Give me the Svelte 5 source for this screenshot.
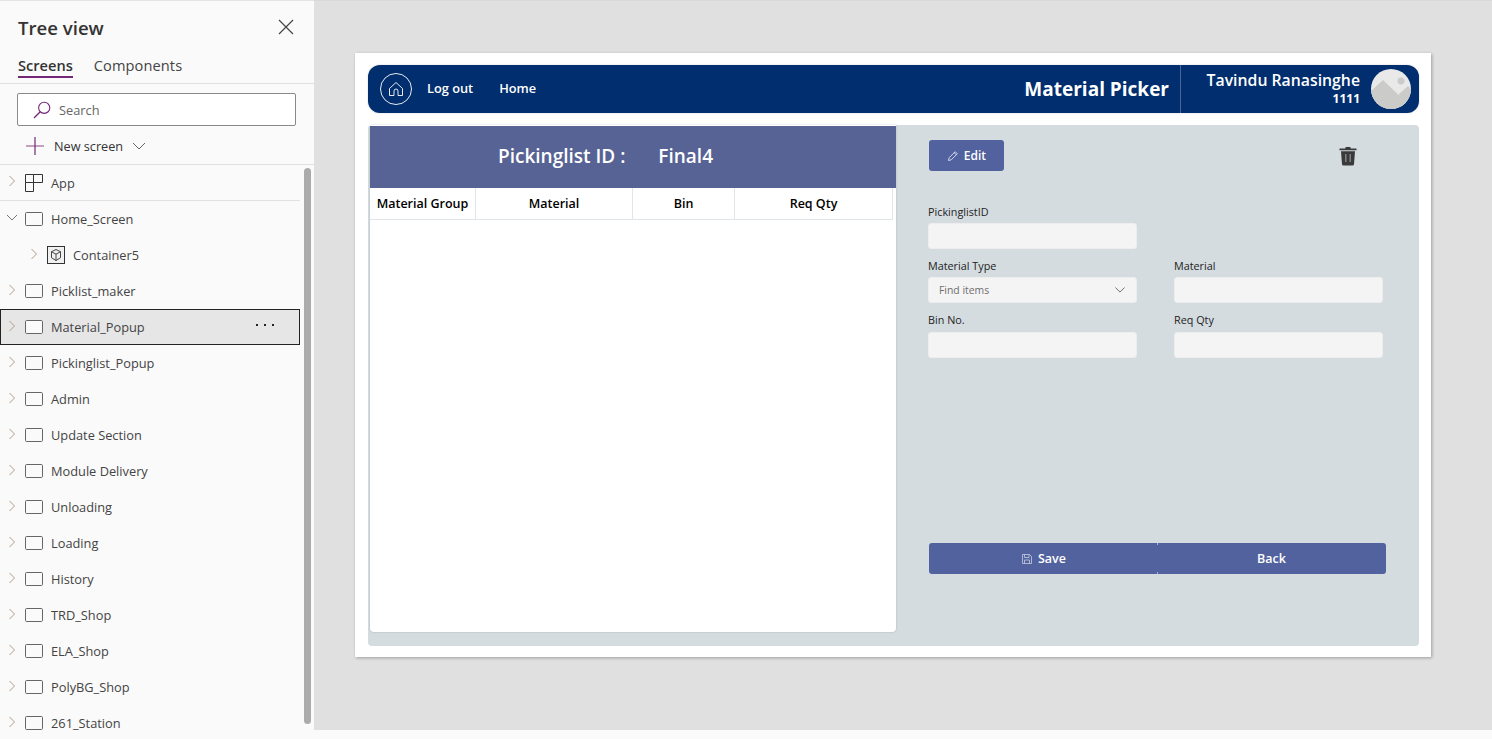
<script>
  const rows = [
    { name: 'App', icon: 'app', sep: true },
    { name: 'Home_Screen', open: true },
    { name: 'Container5', icon: 'box', child: true },
    { name: 'Picklist_maker' },
    { name: 'Material_Popup', selected: true },
    { name: 'Pickinglist_Popup' },
    { name: 'Admin' },
    { name: 'Update Section' },
    { name: 'Module Delivery' },
    { name: 'Unloading' },
    { name: 'Loading' },
    { name: 'History' },
    { name: 'TRD_Shop' },
    { name: 'ELA_Shop' },
    { name: 'PolyBG_Shop' },
    { name: '261_Station' }
  ];
  const cols = ['Material Group', 'Material', 'Bin', 'Req Qty'];
</script>

<div class="app">
  <aside class="tree">
    <div class="title-row">
      <h1>Tree view</h1>
      <svg class="close" viewBox="0 0 16 16" width="16" height="16"><path d="M1 1l14 14M15 1L1 15" stroke="#444" stroke-width="1.2" fill="none"/></svg>
    </div>
    <div class="tabs">
      <span class="tab active">Screens</span>
      <span class="tab">Components</span>
    </div>
    <div class="search">
      <svg viewBox="0 0 20 20" width="20" height="20"><circle cx="12.2" cy="7.8" r="5.6" fill="none" stroke="#742774" stroke-width="1.1"/><path d="M8.2 11.8L2 18" stroke="#742774" stroke-width="1.3"/></svg>
      <span>Search</span>
    </div>
    <div class="new-screen">
      <svg viewBox="0 0 18 18" width="18" height="18"><path d="M0 9h18" stroke="#9b6a9b" stroke-width="1.2"/><path d="M9 0v18" stroke="#742774" stroke-width="1.2"/></svg>
      <span>New screen</span>
      <svg viewBox="0 0 14 8" width="14" height="8"><path d="M1 1l6 6 6-6" stroke="#666" fill="none"/></svg>
    </div>
    <div class="list">
      {#each rows as r}
        <div class="row" class:selected={r.selected} class:sep={r.sep} class:child={r.child}>
          <svg class="chev" viewBox="0 0 8 12" width="8" height="12">
            {#if r.open}
              <path d="M-1 3l5 5 5-5" stroke="#777" fill="none"/>
            {:else}
              <path d="M1.5 1l5 5-5 5" stroke="#b59a83" fill="none"/>
            {/if}
          </svg>
          {#if r.icon === 'app'}
            <svg class="ic" viewBox="0 0 18 18" width="18" height="18"><path d="M.5 .5h8v8h-8zM8.5 .5h9v8h-9zM.5 8.5h8v9h-8z" fill="none" stroke="#333"/></svg>
          {:else if r.icon === 'box'}
            <svg class="ic" viewBox="0 0 18 18" width="18" height="18"><rect x=".5" y=".5" width="17" height="17" fill="#f0f0f0" stroke="#333"/><path d="M9 3.5l4.5 2.2v6L9 14.5l-4.5-2.800v-6zM4.500 5.700L9 8.200l4.500-2.500M9 8.200v6.300" fill="none" stroke="#333" stroke-width=".9"/></svg>
          {:else}
            <svg class="ic" viewBox="0 0 18 14" width="18" height="14"><rect x=".5" y=".5" width="17" height="13" rx="1.200" fill="#fafafa" stroke="#666"/></svg>
          {/if}
          <span class="label">{r.name}</span>
          {#if r.selected}
            <svg class="more" viewBox="0 0 18 2" width="18" height="2"><rect x="0" width="2" height="2" fill="#222"/><rect x="8" width="2" height="2" fill="#222"/><rect x="16" width="2" height="2" fill="#222"/></svg>
          {/if}
        </div>
      {/each}
    </div>
    <div class="scrollbar"></div>
  </aside>

  <main class="stage">
    <div class="canvas">
      <header class="topbar">
        <div class="home-ic">
          <svg viewBox="0 0 16 16" width="16" height="16"><path d="M1.500 7.500L8 1.500l6.500 6v7h-4.500v-4.500a2 2 0 0 0-4 0v4.500H1.500z" fill="none" stroke="#fff" stroke-width=".9"/></svg>
        </div>
        <a class="nav first">Log out</a>
        <a class="nav">Home</a>
        <span class="app-title">Material Picker</span>
        <div class="user">
          <div class="who">
            <div class="uname">Tavindu Ranasinghe</div>
            <div class="uid">1111</div>
          </div>
          <svg class="avatar" viewBox="0 0 40 40" width="40" height="40">
            <defs><clipPath id="cc"><circle cx="20" cy="20" r="20"/></clipPath></defs>
            <circle cx="20" cy="20" r="20" fill="#e9e9e9"/>
            <g clip-path="url(#cc)">
              <path d="M0 22L12 11l25 24 6-7v14H0z" fill="#cbcbc9"/>
              <path d="M28 25l9-8 5 5v20H30z" fill="#cbcbc9"/>
              <circle cx="30" cy="12" r="3.500" fill="#cbcbc9"/>
            </g>
          </svg>
        </div>
      </header>

      <section class="body">
        <div class="card">
          <div class="card-head">
            <span class="pl">Pickinglist ID :</span>
            <span class="pv">Final4</span>
          </div>
          <div class="thead">
            {#each cols as c}<div class="th">{c}</div>{/each}
          </div>
        </div>

        <div class="panel">
          <div class="tools">
            <button class="edit">
              <svg viewBox="0 0 12 12" width="12" height="12"><path d="M1.500 10.500l.7-2.800 6-6 2.100 2.100-6 6zM7.200 2.700l2.100 2.100" fill="none" stroke="#dfe3f0" stroke-width=".9"/></svg>
              Edit
            </button>
            <svg class="trash" viewBox="0 0 18 20" width="18" height="20"><path d="M6.500 2.500V1h5v1.500H17.500v1.700H.5V2.500z" fill="#3a3a3a"/><path d="M2 5.200h14l-1 13a1.500 1.500 0 0 1-1.500 1.300h-9A1.500 1.500 0 0 1 3 18.200z" fill="#3a3a3a"/><path d="M6.800 8v8M11.200 8v8" stroke="#8b8f90" stroke-width="1.300"/></svg>
          </div>

          <div class="form">
            <label class="field"><span>PickinglistID</span><div class="input"></div></label>
            <div></div>
            <label class="field"><span>Material Type</span>
              <div class="input select"><em>Find items</em>
                <svg viewBox="0 0 12 7" width="10" height="6"><path d="M.5 .5L6 6l5.500-5.500" fill="none" stroke="#555"/></svg>
              </div>
            </label>
            <label class="field"><span>Material</span><div class="input"></div></label>
            <label class="field"><span>Bin No.</span><div class="input"></div></label>
            <label class="field"><span>Req Qty</span><div class="input"></div></label>
          </div>

          <div class="actions">
            <button class="act left">
              <svg viewBox="0 0 10 10" width="10" height="10"><path d="M.5 .5h7l2 2v7h-9zM2.500 .5v3h4.500v-3M2.500 9.500v-3.500h5v3.500" fill="none" stroke="#c8cde2" stroke-width=".8"/></svg>
              Save
            </button>
            <button class="act right">Back</button>
          </div>
        </div>
      </section>
    </div>
  </main>
</div>

<style>
  :global(body) { margin: 0; background: #fafafa; overflow: hidden; }
  .app { display: flex; width: 1492px; height: 739px; overflow: hidden; }

  .tree {
    position: relative; width: 314px; flex: none; height: 739px; box-sizing: border-box;
    background: #fafafa; font-family: "Open Sans", "Noto Sans", sans-serif; color: #333;
    border-top: 1px solid #e4e4e4; overflow: hidden;
  }
  .title-row { display: flex; align-items: center; justify-content: space-between; height: 27px; padding: 13px 20px 0 18px; }
  .title-row h1 { margin: 0; font-size: 18.600px; font-weight: 600; color: #333; line-height: 27px; }
  .close { display: block; margin-top: -1px; }
  .tabs { display: flex; gap: 21px; height: 43px; padding-left: 18px; border-bottom: 1px solid #e1e1e1; box-sizing: border-box; align-items: flex-start; padding-top: 14px; }
  .tab { font-size: 14.600px; line-height: 20px; color: #444; letter-spacing: .1px; position: relative; }
  .tab.active { font-weight: 600; color: #333; letter-spacing: 0; }
  .tab.active::after { content: ""; position: absolute; left: 0; right: 0; bottom: -3px; height: 2px; background: #742774; }
  .search {
    margin: 9px 0 0 17px; width: 279px; height: 33px; box-sizing: border-box; border: 1px solid #8a8a8a; border-radius: 2px;
    background: #fff; display: flex; align-items: center; gap: 7px; padding-left: 14px; font-size: 12.800px; color: #666;
  }
  .new-screen { display: flex; align-items: center; height: 39px; padding: 1px 0 0 26px; font-size: 12.700px; color: #333; box-sizing: border-box; border-bottom: 1px solid #e1e1e1; }
  .new-screen span { margin: 0 9px 0 10px; }
  .list { display: flex; flex-direction: column; }
  .row { display: flex; align-items: center; height: 36px; box-sizing: border-box; width: 300px; padding-left: 8px; font-size: 12.800px; color: #444; position: relative; }
  .row.sep { border-bottom: 1px solid #e1e1e1; }
  .row.child { padding-left: 30px; }
  .row.selected { background: #e6e6e6; border: 1px solid #222; padding-left: 7px; margin-top: 0; }
  .chev { flex: none; margin-top: -3px; overflow: visible; }
  .ic { flex: none; margin-left: 9px; }
  .label { margin-left: 8px; white-space: nowrap; }
  .more { position: absolute; left: 255px; top: 14px; }
  .scrollbar { position: absolute; left: 304px; top: 167px; width: 7px; height: 556px; border-radius: 4px; background: #ababab; }

  .stage { flex: 1; height: 730px; background: #e0e0e0; padding: 52px 0 0 41px; box-sizing: border-box; border-top: 1px solid #d9d9d9; font-family: "Open Sans", sans-serif; }
  .canvas { width: 1076px; height: 604px; background: #fff; box-shadow: 1px 1px 3px rgba(0,0,0,.3); box-sizing: border-box; padding: 12px 12px 11px 13px; }

  .topbar {
    display: flex; align-items: center; height: 48px; background: #002e6e; border-radius: 12px; color: #fff; box-sizing: border-box; padding-left: 12px;
    box-shadow: 0 0 2px rgba(0,0,0,.2);
  }
  .home-ic { width: 30px; height: 30px; border: 1px solid #e8ecf4; border-radius: 50%; display: flex; align-items: center; justify-content: center; flex: none; margin-top: -1px; }
  .nav { font-size: 12.800px; font-weight: 600; color: #fff; margin-left: 26px; line-height: 18px; margin-top: -2px; }
  .nav.first { margin-left: 15px; }
  .app-title { margin-left: auto; font-size: 19px; font-weight: 700; margin-right: 11px; margin-top: -1px; }
  .user { display: flex; align-items: center; height: 48px; width: 239px; box-sizing: border-box; border-left: 1px solid #4d6496; justify-content: flex-end; padding-right: 8px; flex: none; }
  .who { text-align: right; margin-right: 11px; margin-top: -2px; }
  .uname { font-size: 15.800px; font-weight: 600; line-height: 18px; }
  .uid { font-size: 12px; font-weight: 700; line-height: 14px; margin-top: 3px; }
  .avatar { display: block; flex: none; }

  .body { display: flex; height: 521px; margin-top: 12px; background: #d5dce0; border-radius: 4px; }
  .card { width: 526px; height: 507px; margin-left: 2px; background: #fff; border-radius: 0 0 4px 4px; box-shadow: 0 0 2px rgba(0,0,0,.22); flex: none; box-sizing: border-box; padding-top: 1px; }
  .card-head { height: 62px; background: #576394; color: #fff; display: flex; align-items: center; font-size: 19px; font-weight: 600; box-sizing: border-box; padding-bottom: 3px; }
  .pl { margin-left: 128px; }
  .pv { margin-left: 33px; }
  .thead { display: grid; grid-template-columns: 106px 157px 102px 158px; height: 31px; width: 523px; border-bottom: 1px solid #dfe5e8; }
  .th { display: flex; align-items: center; justify-content: center; font-size: 12.500px; font-weight: 600; color: #000; border-right: 1px solid #dfe5e8; white-space: nowrap; box-sizing: border-box; }

  .panel { flex: 1; display: flex; flex-direction: column; padding: 15px 33px 72px 32px; box-sizing: border-box; min-width: 0; }
  .tools { display: flex; align-items: center; justify-content: space-between; height: 31px; padding: 0 29px 0 1px; margin-bottom: 34px; }
  .edit { display: flex; align-items: center; justify-content: center; gap: 5px; width: 75px; height: 31px; border: 0; border-radius: 3px; background: #51629e; color: #fff; font: 600 12px "Open Sans", sans-serif; padding: 0; }
  .trash { display: block; }
  .form { display: grid; grid-template-columns: 209px 209px; column-gap: 37px; row-gap: 10px; grid-template-rows: 44px 44px 45px; }
  .field { display: flex; flex-direction: column; justify-content: space-between; }
  .field span { font-size: 10.800px; font-weight: 500; color: #222; line-height: 14px; }
  .input { height: 26px; box-sizing: border-box; border: 1px solid #ededed; border-radius: 3px; background: #f4f4f4; }
  .select { display: flex; align-items: center; justify-content: space-between; padding: 0 11px 0 10px; }
  .select em { font-style: normal; font-size: 10.400px; color: #6e6e6e; }
  .actions { display: flex; margin-top: auto; padding-left: 1px; width: 458px; }
  .act { height: 31px; border: 0; background: #51629e; color: #fff; font: 600 12.500px "Open Sans", sans-serif; display: flex; align-items: center; justify-content: center; gap: 6px; padding: 0; position: relative; }
  .act.left { width: 228px; border-radius: 3px 0 0 3px; padding-left: 2px; }
  .act.right { width: 229px; border-radius: 0 3px 3px 0; }
  .act.right::before, .act.right::after { content: ""; position: absolute; left: 0; width: 1px; height: 2px; background: #a9b2c8; }
  .act.right::before { top: 0; }
  .act.right::after { bottom: 0; }
</style>
